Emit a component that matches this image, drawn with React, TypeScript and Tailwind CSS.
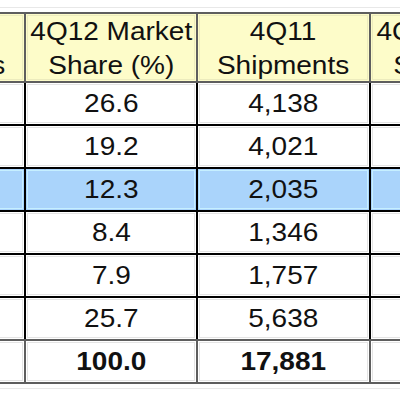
const columns = [
  { head: ["4Q12", "Shipments"], values: ["", "", "", "", "", "", ""] },
  { head: ["4Q12 Market", "Share (%)"], values: ["26.6", "19.2", "12.3", "8.4", "7.9", "25.7", "100.0"] },
  { head: ["4Q11", "Shipments"], values: ["4,138", "4,021", "2,035", "1,346", "1,757", "5,638", "17,881"] },
  { head: ["4Q11 Market", "Share (%)"], values: ["", "", "", "", "", "", ""] },
]

const widths = ["w-[172px]", "w-[172px]", "w-[173px]", "w-[172px]"]

// rows 0-4 have black rules, 5 and 6 gray; row 2 is the highlighted one
const rowBorders = ["border-black", "border-black", "border-black", "border-black", "border-black", "border-[#5e5e5e]", "border-[#5e5e5e]"]
const cellBorders = ["border-black", "border-black", "border-black", "border-black", "border-black", "border-black", "border-[#5e5e5e]"]

function HeaderRow() {
  return (
    <div className="flex h-[71px] border-y-2 border-[#5e5e5e] bg-[#fdfcc9]">
      {columns.map((col, i) => (
        <div key={i} className={`${widths[i]} shrink-0 border-r-2 border-[#5e5e5e] p-px`}>
          <div className="flex h-full items-center justify-center border border-[#ecebbd]">
            <span className="inline-block scale-x-[1.12] text-center text-[25px] leading-[34px] text-[#111]">
              {col.head[0]}
              <br />
              {col.head[1]}
            </span>
          </div>
        </div>
      ))}
    </div>
  )
}

function BodyRow({ index }: { index: number }) {
  const highlight = index === 2
  const total = index === 6
  return (
    <div className={`flex h-[43px] border-b-2 ${rowBorders[index]} ${highlight ? "bg-[#aad4fb]" : "bg-white"}`}>
      {columns.map((col, i) => (
        <div key={i} className={`${widths[i]} shrink-0 border-r-2 ${cellBorders[index]} p-px`}>
          <div
            className={`flex h-full items-center justify-center border ${
              highlight ? "border-[#c6efff]" : "border-[#e4e4e4]"
            }`}
          >
            <span className={`inline-block scale-x-[1.12] text-[25px] leading-none text-[#111] ${total ? "font-bold" : ""}`}>
              {col.values[index]}
            </span>
          </div>
        </div>
      ))}
    </div>
  )
}

export default function App() {
  return (
    <div className="h-[400px] w-[400px] overflow-hidden bg-white font-['Liberation_Sans',Arial,sans-serif]">
      <div className="mt-[7px] border-y border-[#e8e8e8] pt-[4px] pb-[4px]">
        <div className="ml-[-146px] w-[689px]">
          <HeaderRow />
          {[0, 1, 2, 3, 4, 5, 6].map((r) => (
            <BodyRow key={r} index={r} />
          ))}
        </div>
      </div>
    </div>
  )
}
